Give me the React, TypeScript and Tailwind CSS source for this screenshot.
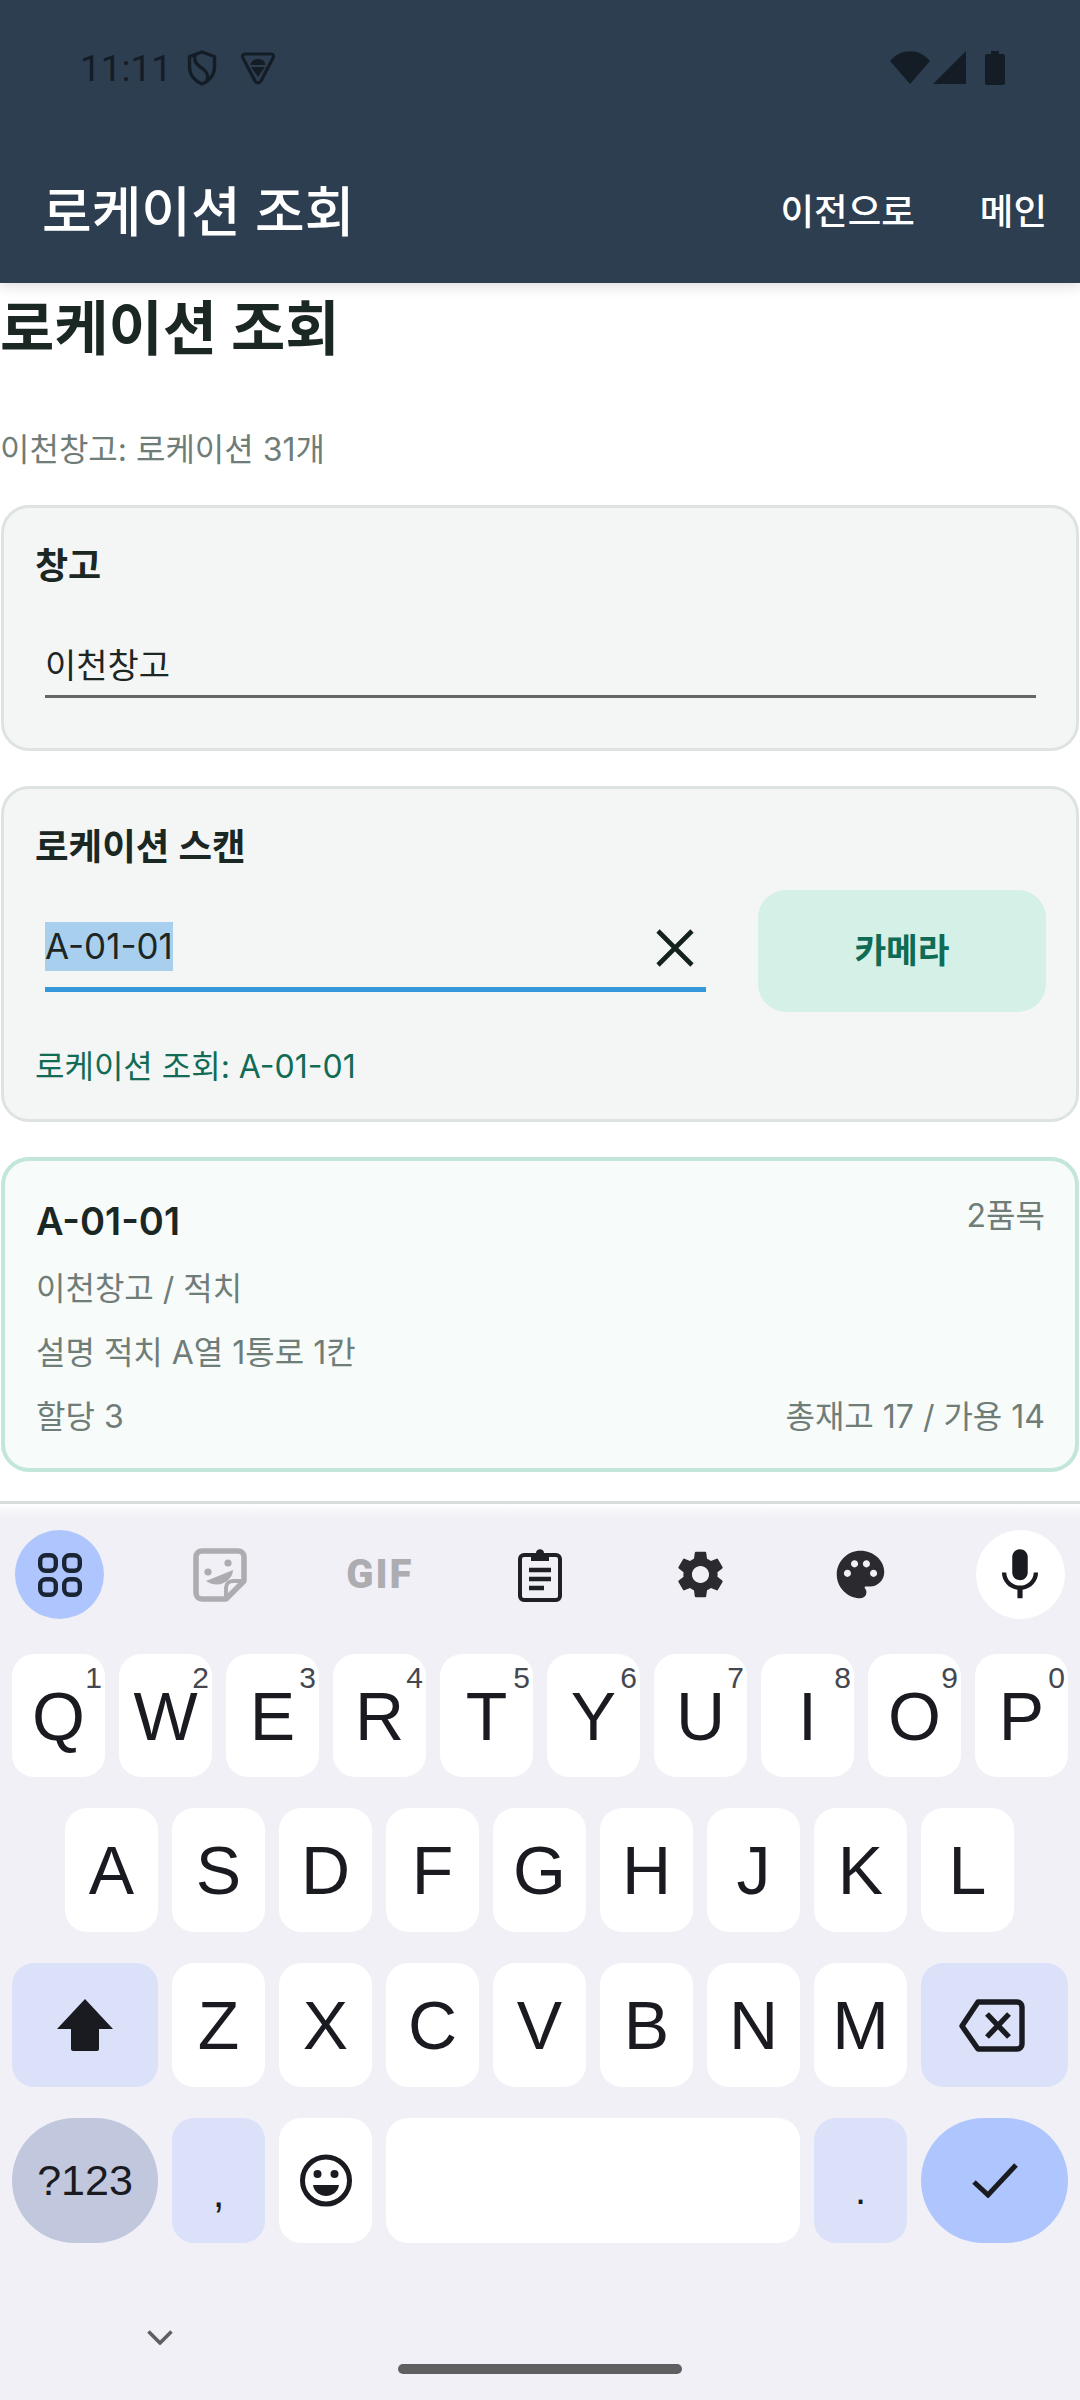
import React from "react";
import { MdSettings, MdPalette, MdMic } from "react-icons/md";

const kr = { fontFamily: 'Inter, "Noto Sans CJK KR", "Noto Sans", sans-serif' };
const kb = { fontFamily: '"Liberation Sans", Arial, sans-serif' };

function Key({ label, sup }: { label: string; sup?: string }) {
  return (
    <div className="relative flex-1 h-full bg-white rounded-[22px] flex items-center justify-center text-[68px] leading-none text-[#1a1b20]">
      {label}
      {sup ? <span className="absolute right-[3px] top-[6px] text-[30px] leading-[36px] text-[#44474f]">{sup}</span> : null}
    </div>
  );
}

function Slot({ children, className }: { children: React.ReactNode; className?: string }) {
  return <div className={"w-[89px] h-[89px] rounded-full flex items-center justify-center " + (className ?? "")}>{children}</div>;
}

export default function App() {
  return (
    <div className="w-[1080px] h-[2400px] bg-white flex flex-col overflow-hidden" style={kr}>
      <header className="relative z-10 h-[283px] shrink-0 bg-[#2c3e50] shadow-[0_4px_12px_rgba(0,0,0,0.12)] flex flex-col">
        <div className="h-[136px] pt-[50px] pl-[80px] pr-[75px] flex items-start text-[#141d26]">
          <span className="text-[37px] leading-[38px]" style={{ fontFamily: "Roboto, sans-serif" }}>11:11</span>
          <svg width="30" height="36" viewBox="0 0 30 36" className="ml-[15px]" fill="none" stroke="#141d26" strokeWidth="3.4">
            <path d="M15 2 L27.5 6.5 V17 C27.5 25 22 31 15 34 C8 31 2.5 25 2.5 17 V6.5 Z" strokeLinejoin="round" />
            <path d="M8 4.5 C6 13 12 16 16 19 C20 22 22 25 20 31" />
          </svg>
          <svg width="36" height="34" viewBox="0 0 36 34" className="ml-[23px] mt-[1px]" fill="none">
            <path d="M5 3 H31 C33.5 3 34 5 33 7 L21 30 C19.5 32.5 16.5 32.5 15 30 L3 7 C2 5 2.5 3 5 3 Z" stroke="#141d26" strokeWidth="3.2" strokeLinejoin="round" />
            <path d="M10.5 14 C11 10 14 8 18 8 C22 8 25 10 25.5 14 Z M11 16 H25 L18 26 Z" fill="#141d26" />
          </svg>
          <div className="ml-auto flex items-start">
            <svg width="40" height="33" viewBox="0 0 40 33" className="mt-[1px]"><path d="M0 10 C11 -3 29 -3 40 10 L20 33 Z" fill="#141d26" /></svg>
            <svg width="33" height="33" viewBox="0 0 33 33" className="ml-[3px] mt-[1px]"><path d="M33 0 V33 H0 Z" fill="#141d26" /></svg>
            <svg width="20" height="34" viewBox="0 0 20 34" className="ml-[19px] mt-[1px]"><path d="M6 0 H14 V3 H18 C19 3 20 4 20 5 V32 C20 33 19 34 18 34 H2 C1 34 0 33 0 32 V5 C0 4 1 3 2 3 H6 Z" fill="#141d26" /></svg>
          </div>
        </div>
        <div className="flex items-center h-[147px] pt-[6px] pl-[42px] pr-[33px] text-white">
          <h1 className="text-[54px] leading-[64px] font-medium">로케이션 조회</h1>
          <nav className="ml-auto flex items-center gap-[65px] text-[36.5px] font-medium">
            <span>이전으로</span>
            <span>메인</span>
          </nav>
        </div>
      </header>

      <main className="flex-1 min-h-0 flex flex-col">
        <h2 className="mt-[11px] text-[59px] leading-[70px] font-bold text-[#1a2723]">로케이션 조회</h2>
        <p className="mt-[64px] text-[32px] leading-[44px] text-[#6f7d78]">이천창고: 로케이션 31개</p>

        <section className="mt-[33px] mx-[1px] h-[246px] rounded-[28px] border-[3px] border-[#dde3e1] bg-[#f4f6f5] pl-[31px] pr-[32px] pt-[33px]">
          <h3 className="text-[36px] leading-[50px] font-semibold text-[#1a2723]">창고</h3>
          <div className="mt-[49px] ml-[10px] mr-[8px] border-b-[3px] border-[#666666] pb-[7px] pt-[4px] text-[34px] leading-[44px] text-[#1e2624]">이천창고</div>
        </section>

        <section className="mt-[35px] mx-[1px] h-[337px] rounded-[28px] border-[3px] border-[#dde3e1] bg-[#f4f6f5] pl-[31px] pr-[32px] pt-[33px]">
          <h3 className="text-[36.5px] leading-[50px] font-semibold text-[#1a2723]">로케이션 스캔</h3>
          <div className="mt-[17px] flex items-start">
            <div className="relative shrink-0 ml-[10px] w-[661px] h-[103px] pt-[33px] border-b-[5px] border-[#3498db] text-[35px] leading-[49px] text-[#1e2624]">
              <span className="bg-[#a8d0ee] inline-block h-[49px]">A-01-01</span>
              <svg width="38" height="38" viewBox="0 0 38 38" className="absolute right-[12px] top-[40px]" stroke="#14221e" strokeWidth="4.6" fill="none"><path d="M2 2 L36 36 M36 2 L2 36" /></svg>
            </div>
            <button className="shrink-0 ml-[52px] w-[288px] h-[122px] mt-[1px] rounded-[28px] bg-[#d5f0e7] text-[34.5px] font-semibold text-[#0f6b55]">카메라</button>
          </div>
          <p className="mt-[33px] text-[32px] leading-[44px] text-[#116b55]">로케이션 조회: A-01-01</p>
        </section>

        <section className="mt-[35px] mx-[1px] h-[315px] rounded-[28px] border-[4px] border-[#c3e6da] bg-[#f7fbf9] pl-[31px] pr-[30px] pt-[35px] flex flex-col">
          <div className="flex justify-between items-start">
            <span className="text-[38px] leading-[50px] font-semibold text-[#1a2723]">A-01-01</span>
            <span className="mt-0 text-[32px] leading-[40px] text-[#6f7d78]">2품목</span>
          </div>
          <p className="mt-[21px] text-[32px] leading-[44px] text-[#6f7d78]">이천창고 / 적치</p>
          <p className="mt-[20px] text-[32px] leading-[44px] text-[#6f7d78]">설명 적치 A열 1통로 1칸</p>
          <div className="mt-[20px] flex justify-between text-[32px] leading-[44px] text-[#6f7d78]">
            <span>할당 3</span>
            <span>총재고 17 / 가용 14</span>
          </div>
        </section>

        <div className="mt-[29px] h-[3px] bg-[#d9dedc]" />
      </main>

      <div className="h-[13px] shrink-0 bg-gradient-to-b from-white to-[#f0f0f6]" />
      <div className="h-[883px] shrink-0 bg-[#f0f0f6] flex flex-col" style={kb}>
        <div className="mt-[13px] px-[15px] h-[89px] flex items-center justify-between">
          <Slot className="bg-[#aec6fd]">
            <svg width="44" height="44" viewBox="0 0 44 44" fill="none" stroke="#1b2434" strokeWidth="4.4">
              <rect x="2.2" y="2.2" width="15.6" height="15.6" rx="5.5" /><rect x="26.2" y="2.2" width="15.6" height="15.6" rx="5.5" />
              <rect x="2.2" y="26.2" width="15.6" height="15.6" rx="5.5" /><rect x="26.2" y="26.2" width="15.6" height="15.6" rx="5.5" />
            </svg>
          </Slot>
          <Slot>
            <svg width="54" height="54" viewBox="0 0 54 54" fill="none">
              <path d="M9 3 H45 C48.5 3 51 5.5 51 9 V33 L33 51 H9 C5.5 51 3 48.5 3 45 V9 C3 5.5 5.5 3 9 3 Z" stroke="#acacb1" strokeWidth="5.5" strokeLinejoin="round" />
              <path d="M33 51 V40 C33 36 36 33 40 33 H51" stroke="#acacb1" strokeWidth="4" />
              <circle cx="15" cy="24" r="3.6" fill="#acacb1" /><circle cx="35" cy="15" r="3.6" fill="#acacb1" />
              <path d="M13 33 L40 22 C40 32 26 42 13 33 Z" fill="#acacb1" />
            </svg>
          </Slot>
          <Slot>
            <span className="whitespace-nowrap text-[40px] leading-none font-black tracking-[2px] text-[#acacb1]" style={{ fontFamily: "Roboto, sans-serif" }}>GIF</span>
          </Slot>
          <Slot>
            <svg width="44" height="54" viewBox="0 0 44 54" fill="none">
              <rect x="2" y="7" width="40" height="45" rx="4" stroke="#1f2026" strokeWidth="4" />
              <path d="M13 5 H18 C18 0 26 0 26 5 H31 V13 H13 Z" fill="#1f2026" />
              <path d="M11 22 H33 M11 31 H33 M11 40 H26" stroke="#1f2026" strokeWidth="4.5" />
            </svg>
          </Slot>
          <Slot><MdSettings size={57} color="#2b2b2f" /></Slot>
          <Slot><MdPalette size={57} color="#2b2b2f" /></Slot>
          <Slot className="bg-white"><MdMic size={62} color="#1a1b20" /></Slot>
        </div>

        <div className="mt-[35px] px-[12px] h-[123px] flex gap-[14px]">
          {["Q1", "W2", "E3", "R4", "T5", "Y6", "U7", "I8", "O9", "P0"].map((k) => <Key key={k} label={k[0]} sup={k[1]} />)}
        </div>
        <div className="mt-[31px] pl-[65px] pr-[66px] h-[124px] flex gap-[14px]">
          {"ASDFGHJKL".split("").map((k) => <Key key={k} label={k} />)}
        </div>
        <div className="mt-[31px] px-[12px] h-[124px] flex gap-[14px]">
          <div className="w-[146px] shrink-0 h-full rounded-[22px] bg-[#dce1fa] flex items-center justify-center">
            <svg width="56" height="52" viewBox="0 0 56 52"><path d="M28 0 L56 30 H42 V50 C42 51 41 52 40 52 H16 C15 52 14 51 14 50 V30 H0 Z" fill="#1a1b20" strokeLinejoin="round" /></svg>
          </div>
          {"ZXCVBNM".split("").map((k) => <Key key={k} label={k} />)}
          <div className="w-[147px] shrink-0 h-full rounded-[22px] bg-[#dce1fa] flex items-center justify-center pr-[6px]">
            <svg width="66" height="53" viewBox="0 0 66 53" fill="none" stroke="#1a1b20">
              <path d="M19 3 H58 C61 3 63 5 63 8 V45 C63 48 61 50 58 50 H19 L3 27 Z" strokeWidth="5.4" strokeLinejoin="round" />
              <path d="M28 15 L50 38 M50 15 L28 38" strokeWidth="5.4" />
            </svg>
          </div>
        </div>
        <div className="mt-[31px] px-[12px] h-[125px] flex gap-[14px] text-[#1a1b20]">
          <div className="w-[146px] shrink-0 h-full rounded-full bg-[#c1c8de] flex items-center justify-center text-[43px]">?123</div>
          <div className="w-[93px] shrink-0 h-full rounded-[22px] bg-[#dce1fa] flex items-end justify-center pb-[30px] text-[42px] leading-[40px]">,</div>
          <div className="w-[93px] shrink-0 h-full rounded-[22px] bg-white flex items-center justify-center">
            <svg width="52" height="53" viewBox="0 0 52 53" fill="none">
              <circle cx="26" cy="26.5" r="23.5" stroke="#1a1b20" strokeWidth="5" />
              <circle cx="17.5" cy="20" r="4" fill="#1a1b20" /><circle cx="34.5" cy="20" r="4" fill="#1a1b20" />
              <path d="M13 31 H39 C38 38 32 42 26 42 C20 42 14 38 13 31 Z" fill="#1a1b20" />
            </svg>
          </div>
          <div className="flex-1 h-full rounded-[22px] bg-white" />
          <div className="w-[93px] shrink-0 h-full rounded-[22px] bg-[#dce1fa] flex items-end justify-center pb-[33px] text-[40px] leading-[40px]">.</div>
          <div className="w-[147px] shrink-0 h-full rounded-full bg-[#aec6fd] flex items-center justify-center">
            <svg width="46" height="35" viewBox="0 0 46 35" fill="none" stroke="#1a1b20" strokeWidth="5"><path d="M2 19 L16 32 L44 2" /></svg>
          </div>
        </div>

        <div className="relative flex-1">
          <svg width="26" height="15" viewBox="0 0 26 15" fill="none" stroke="#5f5f62" strokeWidth="3.6" className="absolute left-[147px] top-[87px]"><path d="M1.5 1.5 L13 13 L24.5 1.5" /></svg>
          <div className="absolute left-[398px] top-[121px] w-[284px] h-[10px] rounded-full bg-[#5f5f62]" />
        </div>
      </div>
    </div>
  );
}
